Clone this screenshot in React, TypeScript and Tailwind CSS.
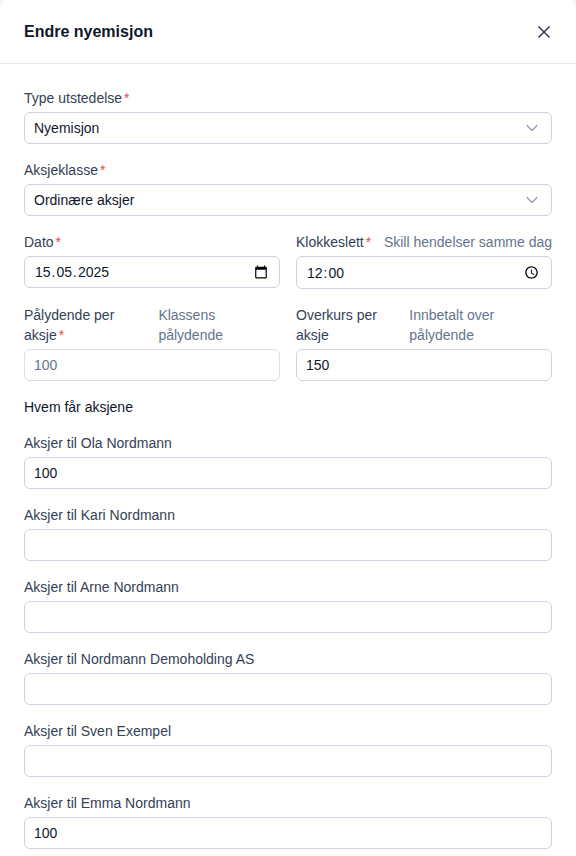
import { ChevronDown, X } from "lucide-react";
import type { ReactNode } from "react";

const inputClass =
  "block h-8 w-full rounded-md border border-[#cbd5e1] bg-white px-[9px] text-sm text-[#0f172a] outline-none";

function Req() {
  return <span className="ml-0.5 text-[#ef4444]">*</span>;
}

function Field({
  label,
  required,
  hint,
  children
}: {
  label: string;
  required?: boolean;
  hint?: string;
  children: ReactNode;
}) {
  return (
    <div>
      <div className="mb-1 flex justify-between gap-1 text-sm leading-5">
        <label className="text-[#334155]">
          {label}
          {required && <Req />}
        </label>
        {hint && <span className="text-[#64748b]">{hint}</span>}
      </div>
      {children}
    </div>
  );
}

function FakeSelect({ value }: { value: string }) {
  return (
    <div className="flex h-8 w-full items-center justify-between rounded-md border border-[#cbd5e1] bg-white pl-[9px] pr-[9px] text-sm text-[#0f172a]">
      <span>{value}</span>
      <ChevronDown className="h-5 w-5 text-[#94a3b8]" strokeWidth={1.75} />
    </div>
  );
}

// chrome's own date/time fields follow the browser locale, so the segments are drawn by hand
function Segments({ parts, separator }: { parts: string[]; separator: string }) {
  return (
    <span className="flex">
      {parts.map((part, i) => (
        <span key={part + i} className="flex">
          {i > 0 && <span>{separator}</span>}
          <span className="px-px">{part}</span>
        </span>
      ))}
    </span>
  );
}

const recipients = [
  { name: "Ola Nordmann", value: "100" },
  { name: "Kari Nordmann", value: "" },
  { name: "Arne Nordmann", value: "" },
  { name: "Nordmann Demoholding AS", value: "" },
  { name: "Sven Exempel", value: "" },
  { name: "Emma Nordmann", value: "100" }
];

export default function App() {
  return (
    <div className="h-[856px] overflow-hidden bg-[#f1f5f9]">
      <div className="h-full rounded-t-lg bg-white font-['Liberation_Sans',Arial,sans-serif]">
        <div className="flex h-16 items-center justify-between border-b border-[#e2e8f0] px-6">
          <h2 className="text-base font-bold text-[#0f172a]">Endre nyemisjon</h2>
          <X className="-mr-0.5 h-5 w-5 text-[#334155]" strokeWidth={2} />
        </div>

        <form className="space-y-4 px-6 pt-6">
          <Field label="Type utstedelse" required>
            <FakeSelect value="Nyemisjon" />
          </Field>
          <Field label="Aksjeklasse" required>
            <FakeSelect value="Ordinære aksjer" />
          </Field>

          <div className="grid grid-cols-2 gap-4">
            <Field label="Dato" required>
              <div className="flex h-8 w-full items-center justify-between rounded-md border border-[#cbd5e1] bg-white pl-[9px] pr-[11px] text-sm text-[#0f172a]">
                <Segments parts={["15", "05", "2025"]} separator="." />
                <svg viewBox="0 0 24 24" className="h-3.5 w-3.5 fill-current text-black">
                  <path d="M20 3h-1V1h-2v2H7V1H5v2H4c-1.1 0-2 .9-2 2v16c0 1.1.9 2 2 2h16c1.1 0 2-.9 2-2V5c0-1.1-.9-2-2-2zm0 18H4V8h16v13z" />
                </svg>
              </div>
            </Field>
            <Field label="Klokkeslett" required hint="Skill hendelser samme dag">
              <div className="flex h-[33px] w-full items-center justify-between rounded-md border border-[#cbd5e1] bg-white pl-[9px] pr-[12px] text-sm text-[#0f172a]">
                <Segments parts={["12", "00"]} separator=":" />
                <svg viewBox="0 0 24 24" className="h-[15px] w-[15px] fill-current text-black">
                  <path d="M11.99 2C6.47 2 2 6.48 2 12s4.47 10 9.99 10C17.52 22 22 17.52 22 12S17.52 2 11.99 2zM12 20c-4.42 0-8-3.58-8-8s3.58-8 8-8 8 3.58 8 8-3.58 8-8 8zm.5-13H11v6l5.25 3.15.75-1.23-4.5-2.67z" />
                </svg>
              </div>
            </Field>
          </div>

          <div className="grid grid-cols-2 gap-4">
            <Field label="Pålydende per aksje" required hint="Klassens pålydende">
              <input defaultValue="100" readOnly className={`${inputClass} !border-[#d9e0ea] !text-[#64748b]`} />
            </Field>
            <Field label="Overkurs per aksje" hint="Innbetalt over pålydende">
              <input defaultValue="150" className={inputClass} />
            </Field>
          </div>

          <p className="text-sm leading-5 text-[#0f172a]">Hvem får aksjene</p>

          {recipients.map((r) => (
            <Field key={r.name} label={`Aksjer til ${r.name}`}>
              <input defaultValue={r.value} className={inputClass} />
            </Field>
          ))}
        </form>
      </div>
    </div>
  );
}
